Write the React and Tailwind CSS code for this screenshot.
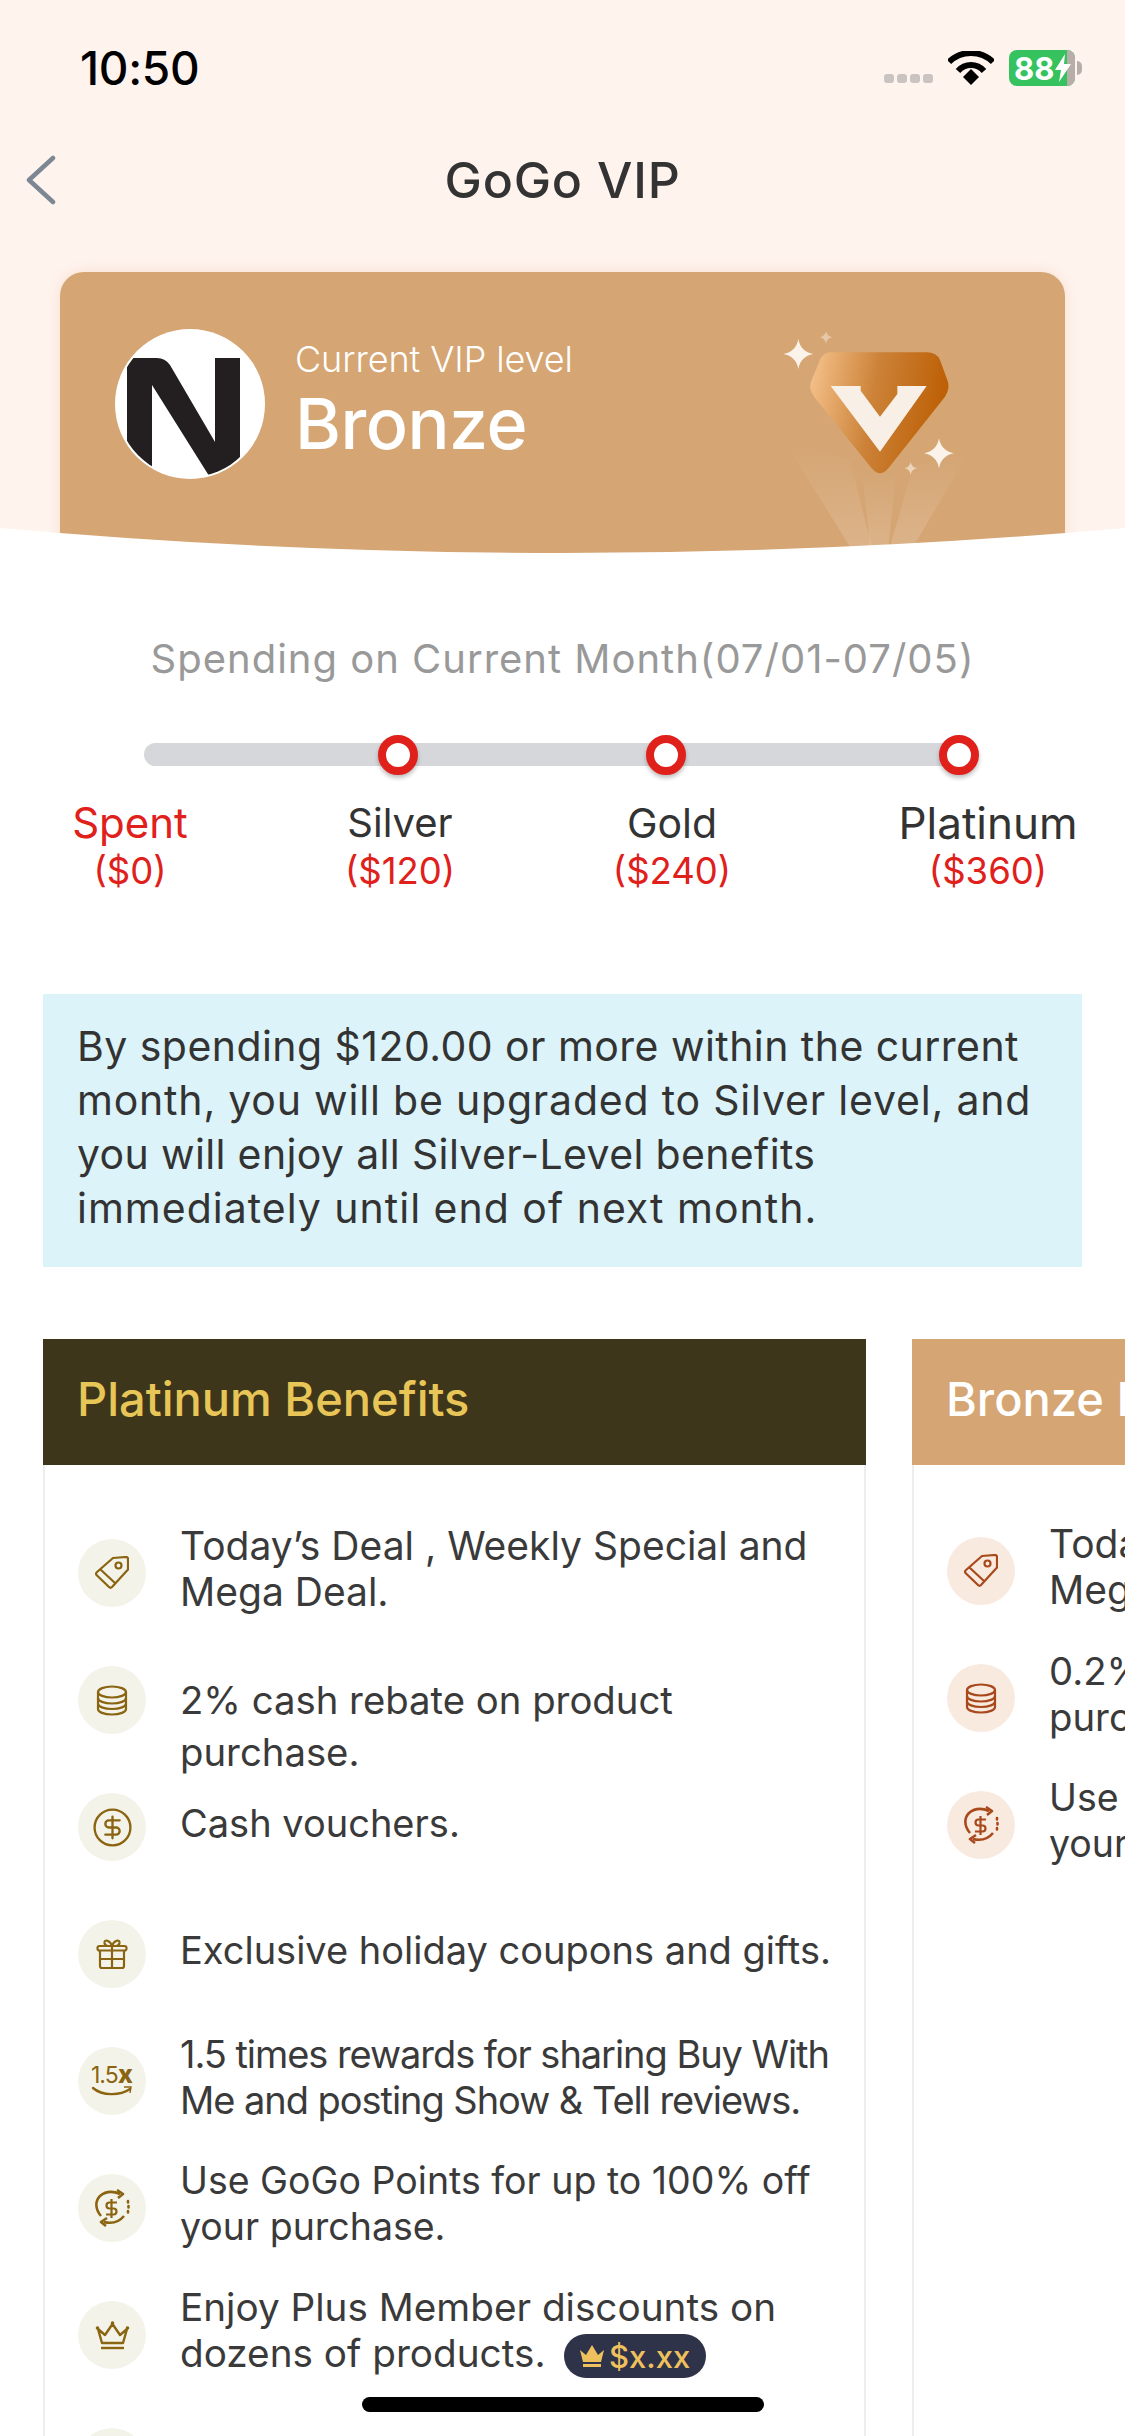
import React from 'react';
import { CircleDollarSign } from 'lucide-react';

const TagIcon = () => (
  <svg width="34" height="34" viewBox="0 0 34 34" fill="none" stroke="currentColor" strokeWidth="2.2" strokeLinejoin="round">
    <path d="M18 2L31 1Q33 1 33 3L33 13.5L17 31Q15.5 32.5 14 31L1.5 19Q0.5 17.5 2 16Z" />
    <path d="M5.5 13.5L20 27" />
    <circle cx="23.5" cy="9.5" r="3" />
  </svg>
);

const CoinsIcon = () => (
  <svg width="32" height="31" viewBox="0 0 32 31" fill="none" stroke="currentColor" strokeWidth="2.2">
    <ellipse cx="16" cy="7" rx="14" ry="5.5" />
    <path d="M2 7V24C2 27 8 29.5 16 29.5S30 27 30 24V7" />
    <path d="M2 13C2 16 8 18.5 16 18.5S30 16 30 13" />
    <path d="M2 18.5C2 21.5 8 24 16 24S30 21.5 30 18.5" />
  </svg>
);

const GiftIcon = () => (
  <svg width="32" height="32" viewBox="0 0 32 32" fill="none" stroke="currentColor" strokeWidth="2.2" strokeLinejoin="round">
    <rect x="1.5" y="8" width="29" height="4.5" rx="2" />
    <path d="M4 12.5V28Q4 30 6 30H26Q28 30 28 28V12.5" />
    <path d="M16 8V30M4 21H28" />
    <path d="M16 8C14 2 8 1 8.5 5C8.8 7 10 8 12 8M16 8C18 2 24 1 23.5 5C23.2 7 22 8 20 8" />
  </svg>
);

const RateIcon = () => (
  <svg width="44" height="34" viewBox="0 0 44 34" fill="currentColor">
    <text x="1" y="19" fontFamily="Inter, sans-serif" fontSize="23" letterSpacing="-1">1.5</text>
    <text x="28" y="19" fontFamily="Inter, sans-serif" fontSize="25" fontWeight="800">x</text>
    <path d="M3 24C12 32 30 32 40 25" fill="none" stroke="currentColor" strokeWidth="2.4" strokeLinecap="round" />
    <path d="M34 23H41L40 29" fill="none" stroke="currentColor" strokeWidth="1.4" />
  </svg>
);

const CycleIcon = () => (
  <svg width="38" height="38" viewBox="0 0 38 38" fill="none" stroke="currentColor" strokeWidth="2.6">
    <path d="M8 27C2 20 2 12 7 7C13 2 20 2 27 5" />
    <path d="M24 1L30 5L25 9" strokeLinejoin="round" />
    <path d="M31 27C26 33 19 35 11 33" />
    <path d="M14 29L8 33L13 37" strokeLinejoin="round" />
    <path d="M24 13.5H16.5A3 3 0 0 0 16.5 19.5H20.5A3 3 0 0 1 20.5 25.5H13M18.5 10V29" strokeWidth="2.2" />
    <path d="M35 12V13.5M35.5 17V18.5M35 22V23.5" strokeLinecap="round" />
  </svg>
);

const CrownIcon = () => (
  <svg width="35" height="29" viewBox="0 0 35 29" fill="none" stroke="currentColor" strokeWidth="2.4" strokeLinejoin="round">
    <path d="M3 8L10 14L17.5 3L25 14L32 8L28 22H7Z" />
    <path d="M6 27H29" />
    <circle cx="2.5" cy="7" r="1.8" fill="currentColor" stroke="none" />
    <circle cx="17.5" cy="2" r="1.8" fill="currentColor" stroke="none" />
    <circle cx="32.5" cy="7" r="1.8" fill="currentColor" stroke="none" />
  </svg>
);

const DollarIcon = () => <CircleDollarSign size={43} strokeWidth={1.3} />;

const platinumRows = [
  { icon: <TagIcon />, text: "Today’s Deal , Weekly Special and Mega Deal.", cls: 'w-[690px] text-[39px]' },
  { icon: <CoinsIcon />, text: '2% cash rebate on product purchase.', cls: 'w-[540px] text-[38.3px]', tall: true },
  { icon: <DollarIcon />, text: 'Cash vouchers.', cls: 'w-[690px] text-[38px]' },
  { icon: <GiftIcon />, text: 'Exclusive holiday coupons and gifts.', cls: 'w-[690px] text-[38px]' },
  { icon: <RateIcon />, text: '1.5 times rewards for sharing Buy With Me and posting Show & Tell reviews.', cls: 'w-[690px] text-[38px] tracking-[-1.05px]' },
  { icon: <CycleIcon />, text: 'Use GoGo Points for up to 100% off your purchase.', cls: 'w-[690px] text-[37.5px]' },
  { icon: <CrownIcon />, text: 'Enjoy Plus Member discounts on dozens of products.', cls: 'w-[690px] text-[38.7px]', pill: true },
  { icon: null, text: '', cls: '' },
];

const bronzeRows = [
  { icon: <TagIcon />, text: "Today’s Deal , Weekly Special and Mega Deal.", cls: 'w-[690px] text-[39px]' },
  { icon: <CoinsIcon />, text: '0.2% cash rebate on product purchase.', cls: 'w-[560px] text-[38.3px]' },
  { icon: <CycleIcon />, text: 'Use GoGo Points for up to 100% off your purchase.', cls: 'w-[690px] text-[37.5px]' },
];

const BenefitRow = ({ row, circle }) => (
  <div className="flex h-[127px] gap-[34px]">
    <div className={`flex h-[68px] w-[68px] shrink-0 items-center justify-center rounded-full ${circle}`}>
      {row.icon}
    </div>
    <div className={`flex-1 ${row.tall ? 'mt-[8px] leading-[52px]' : 'flex h-[68px] items-center leading-[46px]'}`}>
      <p className={`${row.cls} ${row.tall ? '' : 'pb-[8px]'} text-[#3a3a3a]`}>
        {row.text}
        {row.pill && (
          <span className="ml-[18px] inline-flex h-[44px] w-[142px] items-center justify-center gap-[4px] rounded-[22px] bg-[#2f3349] align-middle text-[31px] leading-none font-medium text-[#efc15d]">
            <svg width="26" height="24" viewBox="0 0 26 24" fill="currentColor">
              <path d="M1 6L7 11L13 1L19 11L25 6L22 18H4Z" />
              <rect x="4" y="20" width="18" height="3" />
            </svg>
            $x.xx
          </span>
        )}
      </p>
    </div>
  </div>
);

const Sparkle = ({ x, y, r, opacity = 1 }) => (
  <path
    d={`M${x} ${y - r}Q${x + r * 0.15} ${y - r * 0.15} ${x + r} ${y}Q${x + r * 0.15} ${y + r * 0.15} ${x} ${y + r}Q${x - r * 0.15} ${y + r * 0.15} ${x - r} ${y}Q${x - r * 0.15} ${y - r * 0.15} ${x} ${y - r}Z`}
    fill="#fbf3ea"
    opacity={opacity}
  />
);

const App = () => {
  return (
    <div className="relative h-[2436px] w-[1125px] overflow-hidden bg-white font-['Inter',sans-serif]">
      {/* header */}
      <div className="relative h-[553px] overflow-hidden bg-[#fff3ee]">
        <div className="flex h-[136px] items-center justify-between pr-[43px] pl-[80px]">
          <span className="text-[46px] leading-none font-medium tracking-[-0.3px] text-black">10:50</span>
          <div className="flex items-center">
            <div className="mt-[20px] mr-[15px] flex gap-[3px]">
              <span className="h-[9px] w-[10px] rounded-[3px] bg-[#c9c4c1]"></span>
              <span className="h-[9px] w-[10px] rounded-[3px] bg-[#c9c4c1]"></span>
              <span className="h-[9px] w-[10px] rounded-[3px] bg-[#c9c4c1]"></span>
              <span className="h-[9px] w-[10px] rounded-[3px] bg-[#c9c4c1]"></span>
            </div>
            <svg className="mr-[15px]" width="46" height="34" viewBox="0 0 46 34">
              <path d="M1 11C13 -1 33 -1 45 11" fill="none" stroke="#000" strokeWidth="6" />
              <path d="M10 20C17 12 29 12 36 20" fill="none" stroke="#000" strokeWidth="6" />
              <path d="M15 26L23 18L31 26L23 34Z" fill="#000" />
            </svg>
            <div className="flex h-[36px] w-[66px] items-center overflow-hidden rounded-[8px] bg-[#36c25e]">
              <span className="flex-1 pl-[5px] text-[31px] leading-none font-bold text-white">88</span>
              <svg className="absolute ml-[46px]" width="16" height="28" viewBox="0 0 16 28" fill="#fff">
                <path d="M10 0L0 16H6L4 28L16 10H9Z" />
              </svg>
              <div className="h-full w-[8px] bg-[#b8aea9]"></div>
            </div>
            <div className="ml-[2px] h-[14px] w-[5px] rounded-r-full bg-[#b8aea9]"></div>
          </div>
        </div>
        <div className="grid h-[88px] grid-cols-[1fr_auto_1fr] items-center">
          <svg className="ml-[26px]" width="30" height="50" viewBox="0 0 30 50" fill="none" stroke="#7d8793" strokeWidth="4.5" strokeLinecap="round" strokeLinejoin="round">
            <path d="M27 3L3 25L27 47" />
          </svg>
          <h1 className="text-[50px] leading-none font-medium tracking-[0.8px] text-[#333]">GoGo VIP</h1>
        </div>
        <div className="relative mx-[60px] mt-[48px] flex h-[340px] gap-[30px] rounded-t-[24px] bg-[#d5a573] pt-[57px] pl-[55px] shadow-[0_0_12px_rgba(212,163,115,0.25)]">
          <div className="relative h-[150px] w-[150px] shrink-0 rounded-full bg-white">
            <svg className="absolute inset-0" width="150" height="150" viewBox="0 0 150 150" fill="#231f20">
              <defs>
                <clipPath id="avatarClip">
                  <circle cx="75" cy="75" r="73" />
                </clipPath>
              </defs>
              <path clipPath="url(#avatarClip)" d="M12 29H42Q50 29 55 36L100 113V29H125V150H96L37 56V150H12Z" />
            </svg>
          </div>
          <div className="text-white">
            <p className="mt-[10px] text-[36px] leading-[40px] font-light tracking-[-0.1px]">Current VIP level</p>
            <p className="mt-[7px] text-[70px] leading-[76px] font-medium tracking-[-0.5px]">Bronze</p>
          </div>
          <svg className="absolute top-[28px] left-[680px]" width="300" height="260" viewBox="0 0 900 780" fill="none">
            <defs>
              <linearGradient id="gem" x1="0" y1="0" x2="1" y2="0.15">
                <stop offset="0" stopColor="#f6c48e" />
                <stop offset="0.5" stopColor="#cc8238" />
                <stop offset="1" stopColor="#bd6006" />
              </linearGradient>
              <linearGradient id="ray" x1="0" y1="0" x2="0" y2="1">
                <stop offset="0" stopColor="#fff" stopOpacity="0" />
                <stop offset="1" stopColor="#fff" stopOpacity="0.16" />
              </linearGradient>
            </defs>
            <path d="M130 420L330 740H395L330 480Z" fill="url(#ray)" />
            <path d="M365 500H470L445 740H390Z" fill="url(#ray)" />
            <path d="M520 500L690 450L520 740H450Z" fill="url(#ray)" />
            <path d="M270 157H560Q590 157 600 180L622 240Q632 265 615 290L445 505Q420 535 395 505L222 290Q203 265 215 240L240 180Q250 157 270 157Z" fill="url(#gem)" />
            <path d="M272 258H362V272L420 350L472 282V258H560L420 455Z" fill="#f8efe6" />
            <Sparkle x={175} y={162} r={45} />
            <Sparkle x={258} y={112} r={19} opacity={0.45} />
            <Sparkle x={597} y={460} r={45} />
            <Sparkle x={512} y={505} r={19} opacity={0.6} />
          </svg>
        </div>
        <svg className="absolute bottom-0 left-0" width="1125" height="40" viewBox="0 0 1125 40">
          <path d="M0 15Q562 65 1125 15V40H0Z" fill="#fff" />
        </svg>
      </div>

      {/* spending */}
      <p className="mt-[83px] text-center text-[40px] leading-[46px] tracking-[1px] text-[#999]">
        Spending on Current Month(07/01-07/05)
      </p>
      <div className="mt-[61px] ml-[144px] flex h-[23px] w-[816px] items-center rounded-full bg-[#d6d7da]">
        <span className="ml-[234px] h-[40px] w-[40px] shrink-0 rounded-full border-[8px] border-[#e0201b] bg-white shadow-[0_3px_4px_rgba(0,0,0,0.25)]"></span>
        <span className="ml-[228px] h-[40px] w-[40px] shrink-0 rounded-full border-[8px] border-[#e0201b] bg-white shadow-[0_3px_4px_rgba(0,0,0,0.25)]"></span>
        <span className="ml-[253px] h-[40px] w-[40px] shrink-0 rounded-full border-[8px] border-[#e0201b] bg-white shadow-[0_3px_4px_rgba(0,0,0,0.25)]"></span>
      </div>
      <div className="mt-[33px] flex pl-[30px] text-center text-[#e0201b]">
        <div className="w-[200px]">
          <p className="text-[42px] leading-[48px]">Spent</p>
          <p className="text-[36.5px] leading-[48px]">($0)</p>
        </div>
        <div className="ml-[70px] w-[200px]">
          <p className="text-[40px] leading-[48px] text-[#333]">Silver</p>
          <p className="text-[36.5px] leading-[48px]">($120)</p>
        </div>
        <div className="ml-[72px] w-[200px]">
          <p className="text-[41px] leading-[48px] text-[#333]">Gold</p>
          <p className="text-[36.5px] leading-[48px]">($240)</p>
        </div>
        <div className="ml-[116px] w-[200px]">
          <p className="text-[44px] leading-[48px] text-[#333]">Platinum</p>
          <p className="text-[36.5px] leading-[48px]">($360)</p>
        </div>
      </div>

      {/* upgrade note */}
      <div className="mx-[43px] mt-[99px] h-[273px] bg-[#dcf3fa] px-[34px] pt-[25px] text-[41px] leading-[54px] text-[#333]">
        <p className="tracking-[0.45px]">By spending $120.00 or more within the current</p>
        <p className="tracking-[0.8px]">month, you will be upgraded to Silver level, and</p>
        <p className="tracking-[0.35px]">you will enjoy all Silver-Level benefits</p>
        <p className="tracking-[1px]">immediately until end of next month.</p>
      </div>

      {/* benefit cards */}
      <div className="mt-[72px] flex gap-[46px] pl-[43px]">
        <div className="h-[1200px] w-[823px] shrink-0 border-x-2 border-[#eeeeee]">
          <div className="-mx-[2px] flex h-[126px] items-center bg-[#3e361a] pb-[5px] pl-[34px] text-[47px] font-medium text-[#e8c557]">
            Platinum Benefits
          </div>
          <div className="pt-[74px] pl-[33px] text-[#8a6410]">
            {platinumRows.map((row, i) => (
              <BenefitRow key={i} row={row} circle="bg-[#f4f3ea]" />
            ))}
          </div>
        </div>
        <div className="h-[1200px] w-[823px] shrink-0 border-x-2 border-[#eeeeee]">
          <div className="-mx-[2px] flex h-[126px] items-center bg-[#d5a573] pb-[5px] pl-[34px] text-[47px] font-medium text-white">
            Bronze Benefits
          </div>
          <div className="pt-[72px] pl-[33px] text-[#a8491c]">
            {bronzeRows.map((row, i) => (
              <BenefitRow key={i} row={row} circle="bg-[#f9eae0]" />
            ))}
          </div>
        </div>
      </div>

      {/* home indicator */}
      <div className="absolute top-[2397px] left-[362px] h-[15px] w-[402px] rounded-full bg-black"></div>
    </div>
  );
};

export default App;
